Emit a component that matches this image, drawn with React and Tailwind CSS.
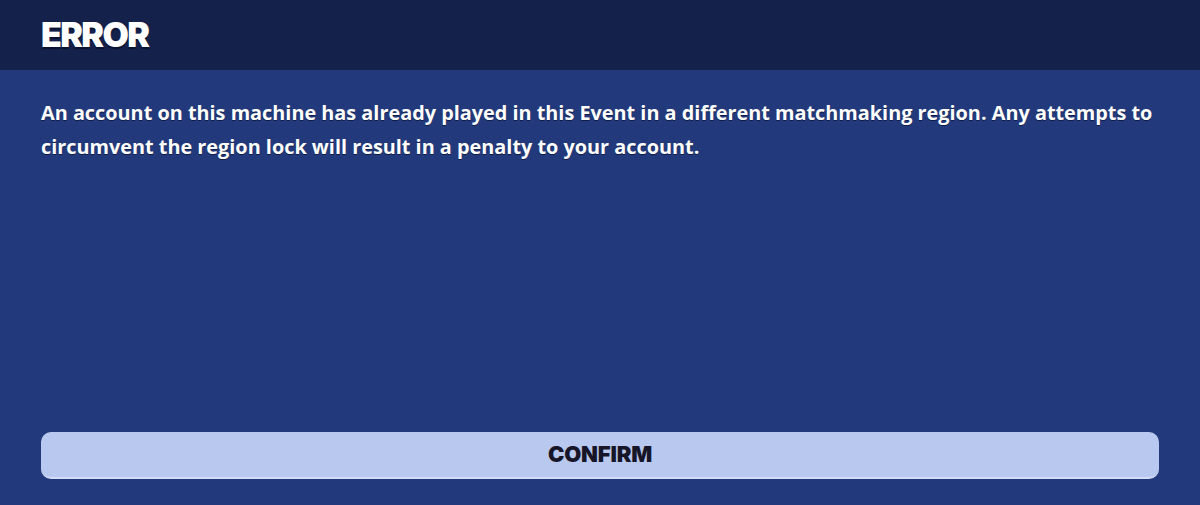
export default function App() {
  return (
    <div className="w-[1200px] h-[505px] flex flex-col bg-[#223a7b] overflow-hidden">
      <header className="h-[70px] shrink-0 bg-[#14214b] flex items-center px-[41px]">
        <h1 className="text-white text-[34px] leading-none font-black tracking-[-1.6px] [font-family:Inter,sans-serif] [text-shadow:0_2px_0_#0b1330]">
          ERROR
        </h1>
      </header>
      <main className="flex-1 flex flex-col px-[41px] pt-[26px] pb-[26px]">
        <p className="text-white text-[19.85px] leading-[34px] font-bold [font-family:'Open_Sans',sans-serif] [text-shadow:0_1px_0_#0f1c45]">
          An account on this machine has already played in this Event in a different matchmaking region. Any attempts to circumvent the region lock will result in a penalty to your account.
        </p>
        <div className="flex-1" />
        <button className="h-[47px] w-full rounded-[10px] bg-[#b9c8ef] border-b-2 border-[#d3ddf7] flex items-center justify-center">
          <span className="text-[#161628] text-[22px] font-black tracking-[-0.2px] [font-family:Inter,sans-serif]">
            CONFIRM
          </span>
        </button>
      </main>
    </div>
  );
}
